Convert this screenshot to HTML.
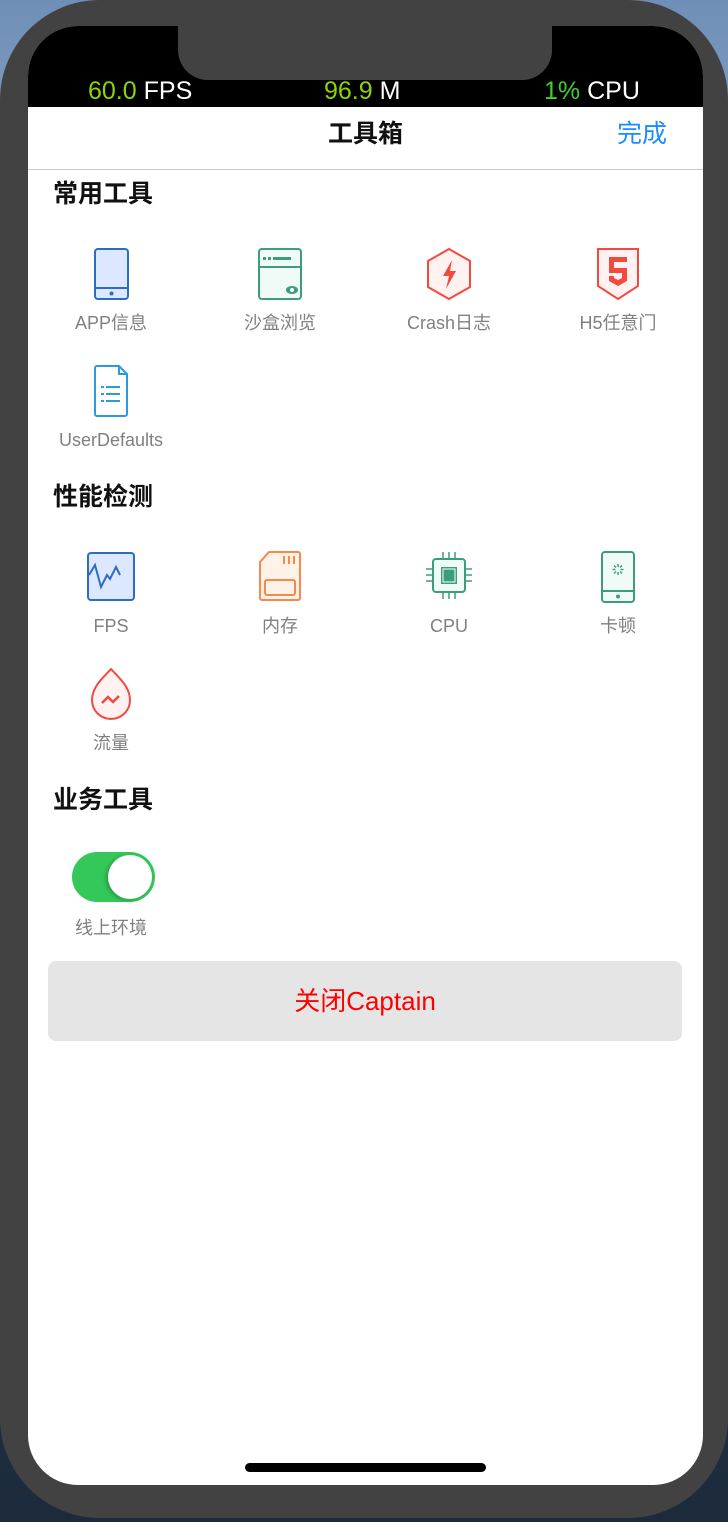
<!DOCTYPE html>
<html><head><meta charset="utf-8"><style>
*{margin:0;padding:0;box-sizing:border-box}
body{width:728px;height:1522px;position:relative;overflow:hidden;background:linear-gradient(#6f8fb8 0%,#8aa4c4 15%,#2d3c52 60%,#1c2a3c 100%);font-family:"Liberation Sans","Noto Sans CJK SC",sans-serif}
.frame{position:absolute;left:0;top:0;width:728px;height:1518px;background:#424242;border-radius:100px}
.screen{position:absolute;left:28px;top:26px;width:675px;height:1459px;background:#fff;border-radius:50px;overflow:hidden}
.status{position:absolute;left:0;top:0;width:675px;height:81px;background:#000}
.notch{position:absolute;left:150px;top:0;width:374px;height:54px;background:#424242;border-radius:0 0 30px 30px}
.stat{position:absolute;top:51px;font-size:25px;color:#fff;line-height:28px}
.nav{position:absolute;top:81px;left:0;width:675px;height:63px;border-bottom:1px solid #c8c8c8;background:#fff}
.title{position:absolute;left:0;width:675px;text-align:center;top:10px;font-size:25px;font-weight:bold;color:#111;line-height:34px}
.done{position:absolute;right:36px;top:10px;font-size:25px;color:#1a8cff;line-height:34px}
.h{position:absolute;left:25px;font-size:25px;font-weight:bold;color:#111;line-height:34px}
.it{position:absolute;width:160px;text-align:center;font-size:18px;color:#808080;line-height:22px}
.it svg{display:block;margin:0 auto 12px}
.btn{position:absolute;left:20px;top:935px;width:634px;height:80px;background:#e5e5e5;border-radius:8px;text-align:center;line-height:80px;font-size:26px;color:#f00}
.home{position:absolute;left:217px;top:1437px;width:241px;height:9px;background:#000;border-radius:5px}
</style></head><body>
<div class="frame"></div>
<div class="screen">
<div class="status"></div>
<div class="notch"></div>
<div class="stat" style="left:60px"><span style="color:#8fd300">60.0</span> FPS</div>
<div class="stat" style="left:296px"><span style="color:#8fd300">96.9</span> M</div>
<div class="stat" style="left:516px"><span style="color:#3dd12b">1%</span> CPU</div>
<div class="nav"><div class="title">工具箱</div><div class="done">完成</div></div>

<div class="h" style="top:151px">常用工具</div>
<div class="it" style="left:3px;top:222px"><svg width="48" height="52" viewBox="0 0 48 52"><rect x="8" y="1" width="33" height="50" rx="3" fill="#dbe8ff" stroke="#2e6cc4" stroke-width="2"/><line x1="8" y1="40" x2="41" y2="40" stroke="#2e6cc4" stroke-width="2"/><circle cx="24.5" cy="45.5" r="2" fill="#2e6cc4"/></svg>APP信息</div>
<div class="it" style="left:172px;top:222px"><svg width="48" height="52" viewBox="0 0 48 52"><rect x="3" y="1" width="42" height="50" rx="3" fill="#f0fbf7" stroke="#3a9e7e" stroke-width="2"/><line x1="3" y1="19" x2="45" y2="19" stroke="#3a9e7e" stroke-width="2"/><rect x="7" y="9" width="3" height="3" fill="#3a9e7e"/><rect x="12" y="9" width="3" height="3" fill="#3a9e7e"/><rect x="17" y="9" width="18" height="3" fill="#3a9e7e"/><ellipse cx="36" cy="42" rx="6" ry="4" fill="#3a9e7e"/><circle cx="36" cy="42" r="2" fill="#fff"/></svg>沙盒浏览</div>
<div class="it" style="left:341px;top:222px"><svg width="48" height="52" viewBox="0 0 48 52"><path d="M24 1 L45 13 V39 L24 51 L3 39 V13 Z" fill="#fff2f0" stroke="#f24a3e" stroke-width="2"/><path d="M27 12 L18 28 H24 L21 41 L31 23 H25 Z" fill="#f24a3e"/></svg>Crash日志</div>
<div class="it" style="left:510px;top:222px"><svg width="48" height="52" viewBox="0 0 48 52"><path d="M4 1 H44 V38 L24 51 L4 38 Z" fill="#fff2f0" stroke="#f24a3e" stroke-width="2"/><path d="M15 9 H33 V14 H20 V20 H33 V33 L24 38 L15 33 V28 H20 V30 L24 32 L28 30 V25 H15 Z" fill="#f24a3e"/></svg>H5任意门</div>
<div class="it" style="left:3px;top:339px"><svg width="48" height="52" viewBox="0 0 48 52"><path d="M10 1 H32 L40 9 V49 a2 2 0 0 1 -2 2 H10 a2 2 0 0 1 -2 -2 V3 a2 2 0 0 1 2 -2 Z" fill="#fff" stroke="#2a9be0" stroke-width="2"/><path d="M32 1 V9 H40" fill="none" stroke="#2a9be0" stroke-width="2"/><g fill="#2a9be0"><rect x="14" y="21" width="3" height="2"/><rect x="19" y="21" width="14" height="2"/><rect x="14" y="28" width="3" height="2"/><rect x="19" y="28" width="14" height="2"/><rect x="14" y="35" width="3" height="2"/><rect x="19" y="35" width="14" height="2"/></g></svg>UserDefaults</div>

<div class="h" style="top:454px">性能检测</div>
<div class="it" style="left:3px;top:525px"><svg width="48" height="52" viewBox="0 0 48 52"><rect x="1" y="2" width="46" height="47" rx="3" fill="#dbe8ff" stroke="#2e6cc4" stroke-width="2"/><path d="M2 24 L8 14 L14 36 L20 24 L23 28 L29 16 L33 24" fill="none" stroke="#2e6cc4" stroke-width="2"/></svg>FPS</div>
<div class="it" style="left:172px;top:525px"><svg width="48" height="52" viewBox="0 0 48 52"><path d="M13 1 H42 a2 2 0 0 1 2 2 V47 a2 2 0 0 1 -2 2 H6 a2 2 0 0 1 -2 -2 V11 Z" fill="#fff2e8" stroke="#f7894a" stroke-width="2"/><rect x="9" y="29" width="30" height="15" rx="2" fill="none" stroke="#f7894a" stroke-width="2"/><g stroke="#f7894a" stroke-width="2"><line x1="28" y1="5" x2="28" y2="13"/><line x1="33" y1="5" x2="33" y2="13"/><line x1="38" y1="5" x2="38" y2="13"/></g></svg>内存</div>
<div class="it" style="left:341px;top:525px"><svg width="48" height="52" viewBox="0 0 48 52"><rect x="8" y="8" width="32" height="33" rx="3" fill="#f0fbf7" stroke="#3a9e7e" stroke-width="2"/><rect x="16" y="16" width="16" height="17" fill="#3a9e7e"/><rect x="18" y="18" width="12" height="13" fill="#3a9e7e" stroke="#fff" stroke-width="1"/><g stroke="#3a9e7e" stroke-width="1.5"><line x1="18" y1="1" x2="18" y2="8"/><line x1="24" y1="1" x2="24" y2="8"/><line x1="30" y1="1" x2="30" y2="8"/><line x1="18" y1="41" x2="18" y2="48"/><line x1="24" y1="41" x2="24" y2="48"/><line x1="30" y1="41" x2="30" y2="48"/><line x1="1" y1="18" x2="8" y2="18"/><line x1="1" y1="24" x2="8" y2="24"/><line x1="1" y1="30" x2="8" y2="30"/><line x1="40" y1="18" x2="47" y2="18"/><line x1="40" y1="24" x2="47" y2="24"/><line x1="40" y1="30" x2="47" y2="30"/></g></svg>CPU</div>
<div class="it" style="left:510px;top:525px"><svg width="48" height="52" viewBox="0 0 48 52"><rect x="8" y="1" width="32" height="50" rx="3" fill="#f0fbf7" stroke="#3a9e7e" stroke-width="2"/><line x1="8" y1="40" x2="40" y2="40" stroke="#3a9e7e" stroke-width="2"/><circle cx="24" cy="45.5" r="2" fill="#3a9e7e"/><g stroke="#3a9e7e" stroke-width="1.5"><line x1="24" y1="13" x2="24" y2="16"/><line x1="24" y1="21" x2="24" y2="24"/><line x1="18.5" y1="18.5" x2="21.5" y2="18.5"/><line x1="26.5" y1="18.5" x2="29.5" y2="18.5"/><line x1="20" y1="14.5" x2="22" y2="16.5"/><line x1="26" y1="20.5" x2="28" y2="22.5"/><line x1="28" y1="14.5" x2="26" y2="16.5"/><line x1="22" y1="20.5" x2="20" y2="22.5"/></g></svg>卡顿</div>
<div class="it" style="left:3px;top:642px"><svg width="48" height="52" viewBox="0 0 48 52"><path d="M24 1 C18 8 5 18 5 32 C5 43 14 51 24 51 C34 51 43 43 43 32 C43 18 30 8 24 1 Z" fill="#fff2f0" stroke="#f24a3e" stroke-width="2"/><path d="M15 35 L21 29 L26 34 L32 28" fill="none" stroke="#f24a3e" stroke-width="2.5"/></svg>流量</div>

<div class="h" style="top:757px">业务工具</div>
<div style="position:absolute;left:44px;top:826px;width:83px;height:50px;border-radius:25px;background:#34c759"><div style="position:absolute;right:3px;top:3px;width:44px;height:44px;border-radius:50%;background:#fff;box-shadow:-2px 1px 4px rgba(0,0,0,.25)"></div></div>
<div class="it" style="left:3px;top:891px">线上环境</div>
<div class="btn">关闭Captain</div>
<div class="home"></div>
</div>
</body></html>
